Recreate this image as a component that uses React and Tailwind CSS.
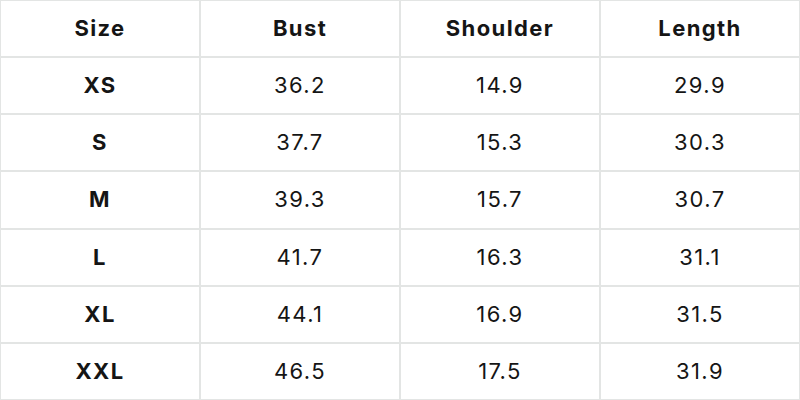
const headers = ["Size", "Bust", "Shoulder", "Length"];

const rows = [
  ["XS", "36.2", "14.9", "29.9"],
  ["S", "37.7", "15.3", "30.3"],
  ["M", "39.3", "15.7", "30.7"],
  ["L", "41.7", "16.3", "31.1"],
  ["XL", "44.1", "16.9", "31.5"],
  ["XXL", "46.5", "17.5", "31.9"],
];

const App = () => {
  return (
    <div
      className="w-[800px] h-[400px] bg-[#e3e5e4] p-[1px] grid grid-cols-4 grid-rows-7 gap-[2px] text-[#151515]"
      style={{ fontFamily: "Inter, 'Liberation Sans', sans-serif" }}
    >
      {headers.map((h) => (
        <div key={h} className="bg-white flex items-center justify-center text-[22px] tracking-[1.4px] font-bold">
          {h}
        </div>
      ))}
      {rows.map((row) =>
        row.map((cell, i) => (
          <div
            key={row[0] + i}
            className={`bg-white flex items-center justify-center text-[22px] tracking-[1.4px] ${i === 0 ? "font-bold" : "font-normal"}`}
          >
            {cell}
          </div>
        ))
      )}
    </div>
  );
};

export default App;
